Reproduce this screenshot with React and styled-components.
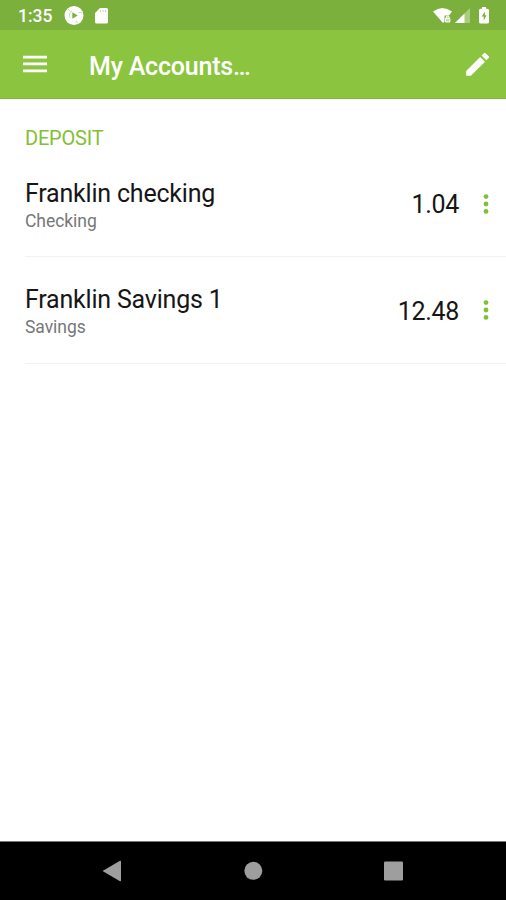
import React from "react";
import styled, { createGlobalStyle } from "styled-components";

const GlobalStyle = createGlobalStyle`
  * {
    box-sizing: border-box;
  }
  body {
    margin: 0;
    background: #fff;
    font-family: Roboto, sans-serif;
  }
  svg {
    display: block;
  }
`;

const Screen = styled.div`
  width: 506px;
  height: 900px;
  display: flex;
  flex-direction: column;
  overflow: hidden;
`;

const StatusBar = styled.div`
  height: 30px;
  padding: 1px 17px 0 18px;
  display: flex;
  align-items: center;
  background: #7cb03d;
  color: #fff;
`;

const Clock = styled.span`
  width: 46px;
  font-size: 17.5px;
  font-weight: 500;
  line-height: 28px;
`;

const StatusIcon = styled.svg`
  width: ${props => props.$width}px;
  height: ${props => props.$height}px;
  margin-left: ${props => props.$gap || 0}px;
  flex: none;
`;

const Spacer = styled.div`
  flex: 1;
`;

const Header = styled.header`
  height: 69px;
  padding: 0 17px 0 23px;
  display: flex;
  align-items: center;
  background: #8bc540;
  border-bottom: 1px solid #7fb830;
  color: #fff;
`;

const IconButton = styled.button`
  background: none;
  color: inherit;
  border: none;
  padding: 0;
  cursor: pointer;
`;

const Title = styled.h1`
  flex: 1;
  margin: 5px 0 0 42px;
  font-size: 25px;
  font-weight: 500;
  line-height: 30px;
  letter-spacing: -0.2px;
`;

const Content = styled.main`
  flex: 1;
  padding-left: 25px;
`;

const SectionTitle = styled.h2`
  margin: 0;
  padding-top: 27px;
  height: 51.5px;
  font-size: 20px;
  font-weight: 400;
  line-height: 24px;
  letter-spacing: -0.2px;
  color: #82c034;
`;

const AccountRow = styled.div`
  height: 106.5px;
  padding: 6px 16px 0 0;
  display: flex;
  align-items: center;
  border-bottom: 1px solid #f2f2f2;
`;

const AccountText = styled.div`
  flex: 1;
`;

const AccountName = styled.div`
  font-size: 25px;
  line-height: 30px;
  letter-spacing: -0.2px;
  color: #161616;
`;

const AccountType = styled.div`
  font-size: 17.5px;
  line-height: 25px;
  letter-spacing: -0.05px;
  color: #777;
`;

const Balance = styled.div`
  margin-top: -2px;
  font-size: 25px;
  line-height: 30px;
  letter-spacing: -0.3px;
  color: #161616;
`;

const MoreButton = styled(IconButton)`
  margin: -5px 0 0 23px;
  color: #80c034;
`;

const NavBar = styled.nav`
  height: 59px;
  padding: 0 102px;
  display: flex;
  align-items: center;
  justify-content: space-between;
  background: #000;
  border-top: 1px solid #777;
  color: #9e9e9e;
`;

const accounts = [
  { id: 1, name: "Franklin checking", type: "Checking", balance: "1.04" },
  { id: 2, name: "Franklin Savings 1", type: "Savings", balance: "12.48" }
];

const Status = () => (
  <StatusBar>
    <Clock>1:35</Clock>
    <StatusIcon $width={20} $height={20} viewBox="0 0 20 20">
      <circle cx="10" cy="9.500" r="9.500" fill="#fff" />
      <path
        d="M6 11.500A5 5 0 0 1 8 5M6.500 5.500 4 3M12 14.500l1.500 2.500M14.500 6.500l3.500 0"
        stroke="#c3dca5"
        fill="none"
      />
      <path d="M8.300 6.300v6.400l5.400-3.200z" fill="#7cb03d" />
    </StatusIcon>
    <StatusIcon $width={13} $height={16} $gap={11} viewBox="0 0 13 16">
      <path
        d="M5 0h6.500A1.500 1.500 0 0 1 13 1.500v12.500a1.500 1.500 0 0 1-1.500 1.500h-10A1.500 1.500 0 0 1 0 14V5z"
        fill="#fff"
      />
      <path d="M5.500 2v2.200M8 2v2.200M10.500 2v2.200" stroke="#c3dca5" />
    </StatusIcon>
    <Spacer />
    <StatusIcon $width={20} $height={16} viewBox="0 0 20 16">
      <path d="M0 3.500Q9.500-3.500 19 3.500L16 7.500H11.500v6L10 15z" fill="#fff" />
      <path
        d="M13 10.500V9.800a1.700 1.700 0 0 1 3.400 0v.7M12.500 10.500h4.400v3.500h-4.400z"
        fill="#c7deac"
        stroke="#fff"
      />
    </StatusIcon>
    <StatusIcon $width={15} $height={15} $gap={2} viewBox="0 0 15 15">
      <path d="M0 15 15 0v15z" fill="#a9cc7f" />
      <path d="M0 15 9.500 5.500V15z" fill="#fff" />
    </StatusIcon>
    <StatusIcon $width={10} $height={17} $gap={9} viewBox="0 0 10 17">
      <path
        d="M3 0h4v1.700h1.500A1.500 1.500 0 0 1 10 3.200v11.800a1.500 1.500 0 0 1-1.500 1.500h-7A1.500 1.500 0 0 1 0 15V3.200a1.500 1.500 0 0 1 1.500-1.500H3z"
        fill="#fff"
      />
      <path d="M5.800 4.500 2.700 9.500h2v4L7.500 8.300H5.800z" fill="#7cb03d" />
    </StatusIcon>
  </StatusBar>
);

const Account = ({ account }) => (
  <AccountRow>
    <AccountText>
      <AccountName>{account.name}</AccountName>
      <AccountType>{account.type}</AccountType>
    </AccountText>
    <Balance>{account.balance}</Balance>
    <MoreButton aria-label="More">
      <svg width="8" height="22" viewBox="0 0 8 22" fill="currentColor">
        <circle cx="4" cy="3.600" r="2.400" />
        <circle cx="4" cy="11" r="2.400" />
        <circle cx="4" cy="18.400" r="2.400" />
      </svg>
    </MoreButton>
  </AccountRow>
);

const App = () => (
  <Screen>
    <GlobalStyle />
    <Status />
    <Header>
      <IconButton aria-label="Menu">
        <svg width="24" height="18" viewBox="0 0 24 18" fill="currentColor">
          <path d="M0 0.700h24v2.700H0zM0 7.600h24v2.700H0zM0 14.500h24v2.700H0z" />
        </svg>
      </IconButton>
      <Title>My Accounts…</Title>
      <IconButton aria-label="Edit">
        <svg width="24" height="24" viewBox="2.100 2.300 18.900 18.900" fill="currentColor">
          <path d="M3 17.250V21h3.750L17.810 9.940l-3.750-3.750L3 17.250zM20.710 7.040a1 1 0 0 0 0-1.410l-2.340-2.340a1 1 0 0 0-1.410 0l-1.830 1.830 3.750 3.750 1.830-1.830z" />
        </svg>
      </IconButton>
    </Header>
    <Content>
      <SectionTitle>DEPOSIT</SectionTitle>
      {accounts.map(account => (
        <Account key={account.id} account={account} />
      ))}
    </Content>
    <NavBar>
      <svg width="20" height="22" viewBox="0 0 20 22" fill="currentColor">
        <path d="M0.500 11 18 0.800Q19 0.500 19 1.500v19Q19 21.500 18 21.200z" />
      </svg>
      <svg width="20" height="20" viewBox="0 0 20 20" fill="currentColor">
        <circle cx="10.300" cy="9.800" r="9" />
      </svg>
      <svg width="20" height="20" viewBox="0 0 20 20" fill="currentColor">
        <rect x="0" y="0.500" width="19" height="19" rx="1.200" />
      </svg>
    </NavBar>
  </Screen>
);

export default App;
